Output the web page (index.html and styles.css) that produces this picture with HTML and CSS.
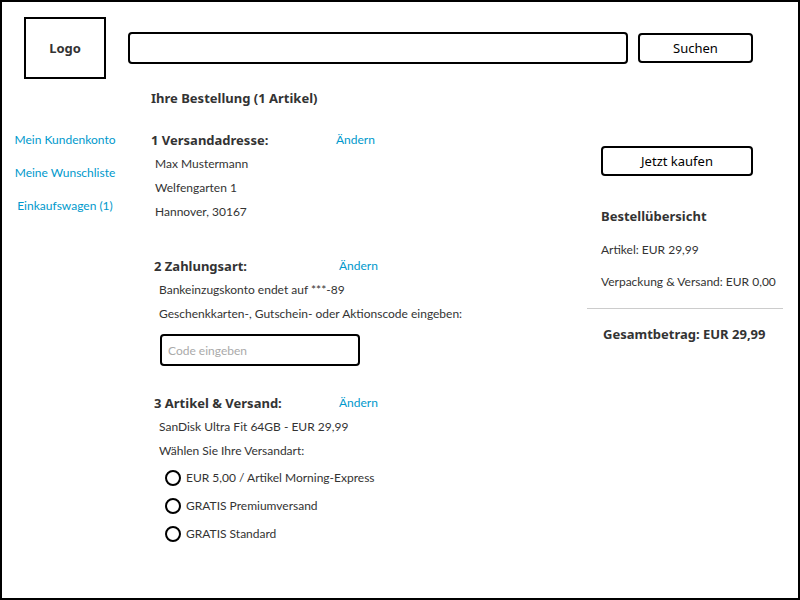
FILE: index.html
```html
<!DOCTYPE html>
<html lang="de">
<head>
<meta charset="utf-8">
<title>Ihre Bestellung</title>
<link rel="stylesheet" href="styles.css">
</head>
<body>
<header class="header">
  <div class="logo">Logo</div>
  <form class="search">
    <input class="field" type="search" aria-label="Suche">
    <button class="button" type="button">Suchen</button>
  </form>
</header>
<div class="columns">
  <nav class="nav">
    <a href="#">Mein Kundenkonto</a>
    <a href="#">Meine Wunschliste</a>
    <a href="#">Einkaufswagen (1)</a>
  </nav>
  <main class="order">
    <h1 class="heading">Ihre Bestellung (1 Artikel)</h1>
    <section class="step step-address">
      <div class="step-head"><h2 class="heading">1 Versandadresse:</h2><a href="#">Ändern</a></div>
      <p>Max Mustermann</p>
      <p>Welfengarten 1</p>
      <p>Hannover, 30167</p>
    </section>
    <section class="step step-payment">
      <div class="step-head"><h2 class="heading">2 Zahlungsart:</h2><a href="#">Ändern</a></div>
      <p>Bankeinzugskonto endet auf ***-89</p>
      <p><label for="code">Geschenkkarten-, Gutschein- oder Aktionscode eingeben:</label></p>
      <input class="field code" id="code" type="text" placeholder="Code eingeben">
    </section>
    <section class="step step-items">
      <div class="step-head"><h2 class="heading">3 Artikel &amp; Versand:</h2><a href="#">Ändern</a></div>
      <p>SanDisk Ultra Fit 64GB - EUR 29,99</p>
      <fieldset class="shipping">
        <legend>Wählen Sie Ihre Versandart:</legend>
        <label><input type="radio" name="ship">EUR 5,00 / Artikel Morning-Express</label>
        <label><input type="radio" name="ship">GRATIS Premiumversand</label>
        <label><input type="radio" name="ship">GRATIS Standard</label>
      </fieldset>
    </section>
  </main>
  <aside class="summary">
    <button class="button buy" type="button">Jetzt kaufen</button>
    <h2 class="heading">Bestellübersicht</h2>
    <p>Artikel: EUR 29,99</p>
    <p>Verpackung &amp; Versand: EUR 0,00</p>
    <p class="total">Gesamtbetrag: EUR 29,99</p>
  </aside>
</div>
</body>
</html>
```

FILE: styles.css
```css
* {
  box-sizing: border-box;
}

body {
  margin: 0;
  min-height: 100vh;
  padding: 15px 15px 0 12px;
  border: 2px solid #000;
  background: #fff;
  color: #333;
  font: 12px/24px Lato, "Open Sans", sans-serif;
}

p,
h1,
h2 {
  margin: 0;
}

p,
legend {
  line-height: 24px;
}

a {
  color: #0099cc;
  text-decoration: none;
}

.heading,
.logo,
.total {
  font-family: "Noto Sans", "Open Sans", sans-serif;
  font-size: 13px;
  font-weight: 700;
}

.heading {
  line-height: 24px;
}

.header {
  display: flex;
  gap: 22px;
  padding: 0 30px 0 10px;
}

.logo {
  width: 82px;
  height: 62px;
  border: 2px solid #000;
  line-height: 58px;
  text-align: center;
}

.search {
  flex: 1;
  display: flex;
  align-items: center;
  gap: 10px;
}

.field {
  height: 32px;
  padding: 0 6px;
  border: 2px solid #000;
  border-radius: 4px;
  background: #fff;
  font: inherit;
  appearance: none;
}

.field::placeholder {
  color: #aaa;
}

.search .field {
  flex: 1;
}

.button {
  width: 115px;
  height: 30px;
  padding: 0;
  border: 2px solid #000;
  border-radius: 4px;
  background: #fff;
  color: #000;
  font: 13px/24px "Noto Sans", "Open Sans", sans-serif;
}

.columns {
  display: grid;
  grid-template-columns: 102px 1fr 196px;
  column-gap: 35px;
  padding-top: 7px;
}

.nav {
  display: flex;
  flex-direction: column;
  align-items: center;
  gap: 9px;
  padding-top: 42px;
  white-space: nowrap;
}

.step {
  padding-left: 3px;
}

.step p,
.shipping {
  padding-left: 5px;
}

.step-head {
  display: grid;
  grid-template-columns: 185px 1fr;
}

.step-address {
  margin-top: 18px;
  padding-left: 0;
}

.step-address p {
  padding-left: 4px;
}

.step-payment {
  margin-top: 30px;
}

.step-items {
  margin-top: 25px;
}

.code {
  display: block;
  width: 200px;
  margin: 8px 0 0 6px;
}

.shipping {
  display: flex;
  flex-direction: column;
  gap: 4px;
  margin: 0;
  border: 0;
  padding: 3px 0 0 5px;
}

.shipping legend {
  padding: 0;
}

.shipping label {
  display: flex;
  align-items: center;
  gap: 5px;
  padding-left: 6px;
}

.shipping input {
  appearance: none;
  width: 16px;
  height: 16px;
  margin: 0;
  border: 2px solid #000;
  border-radius: 50%;
}

.shipping input:checked {
  background: radial-gradient(#000 4px, transparent 5px);
}

.summary {
  padding-top: 60px;
}

.summary .heading,
.summary p {
  margin-left: 14px;
}

.buy {
  display: block;
  width: 152px;
  margin: 0 0 28px 14px;
}

.summary p {
  margin-top: 8px;
  white-space: nowrap;
}

.summary .heading {
  margin-bottom: 10px;
}

.summary .total {
  margin: 14px 0 0;
  padding: 13px 0 0 16px;
  border-top: 1px solid #ccc;
}
```
